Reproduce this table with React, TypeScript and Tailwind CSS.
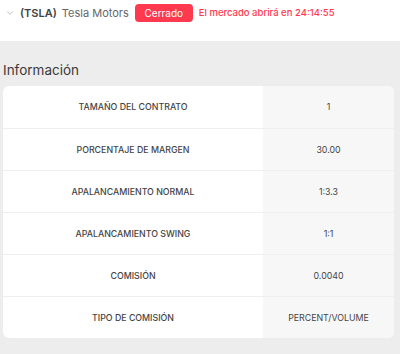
import { ChevronDown } from "lucide-react";

const rows = [
  { label: "TAMAÑO DEL CONTRATO", value: "1" },
  { label: "PORCENTAJE DE MARGEN", value: "30.00" },
  { label: "APALANCAMIENTO NORMAL", value: "1:3.3" },
  { label: "APALANCAMIENTO SWING", value: "1:1" },
  { label: "COMISIÓN", value: "0.0040" },
  { label: "TIPO DE COMISIÓN", value: "PERCENT/VOLUME" },
];

export default function App() {
  return (
    <div
      className="w-[400px] h-[354px] bg-[#ededed] text-[#3f3f46]"
      style={{ fontFamily: "Inter, 'Open Sans', sans-serif" }}
    >
      <div className="h-[41px] bg-white flex items-start pt-[4px] pl-[5px]">
        <div className="flex items-center h-[18px]">
          <ChevronDown className="size-[10px] text-[#b5b5b5]" strokeWidth={2} />
          <span className="ml-[5px] text-[11px] font-semibold text-[#444]">
            (TSLA)
          </span>
          <span className="ml-[5px] text-[11px] text-[#666]">Tesla Motors</span>
          <span className="ml-[6px] h-[18px] w-[58px] rounded-[4px] bg-[#ff3a4f] text-white text-[10px] flex items-center justify-center">
            Cerrado
          </span>
          <span className="ml-[6px] text-[9.5px] font-medium text-[#ff3a4f]">
            El mercado abrirá en 24:14:55
          </span>
        </div>
      </div>

      <h2 className="mt-[19px] ml-[3px] text-[13.5px] leading-[20px] text-[#3a3a3a]">
        Información
      </h2>

      <div className="mt-[6px] ml-[3px] w-[391px] rounded-[6px] bg-white overflow-hidden">
        {rows.map((row, i) => (
          <div
            key={row.label}
            className={`flex h-[42px] ${i > 0 ? "border-t border-[#efefef]" : ""}`}
          >
            <div className="w-[260px] flex items-center justify-center text-[8.8px] font-medium text-[#444]">
              {row.label}
            </div>
            <div className="flex-1 bg-[#f7f7f7] flex items-center justify-center text-[8.8px] text-[#444]">
              {row.value}
            </div>
          </div>
        ))}
      </div>
    </div>
  );
}
